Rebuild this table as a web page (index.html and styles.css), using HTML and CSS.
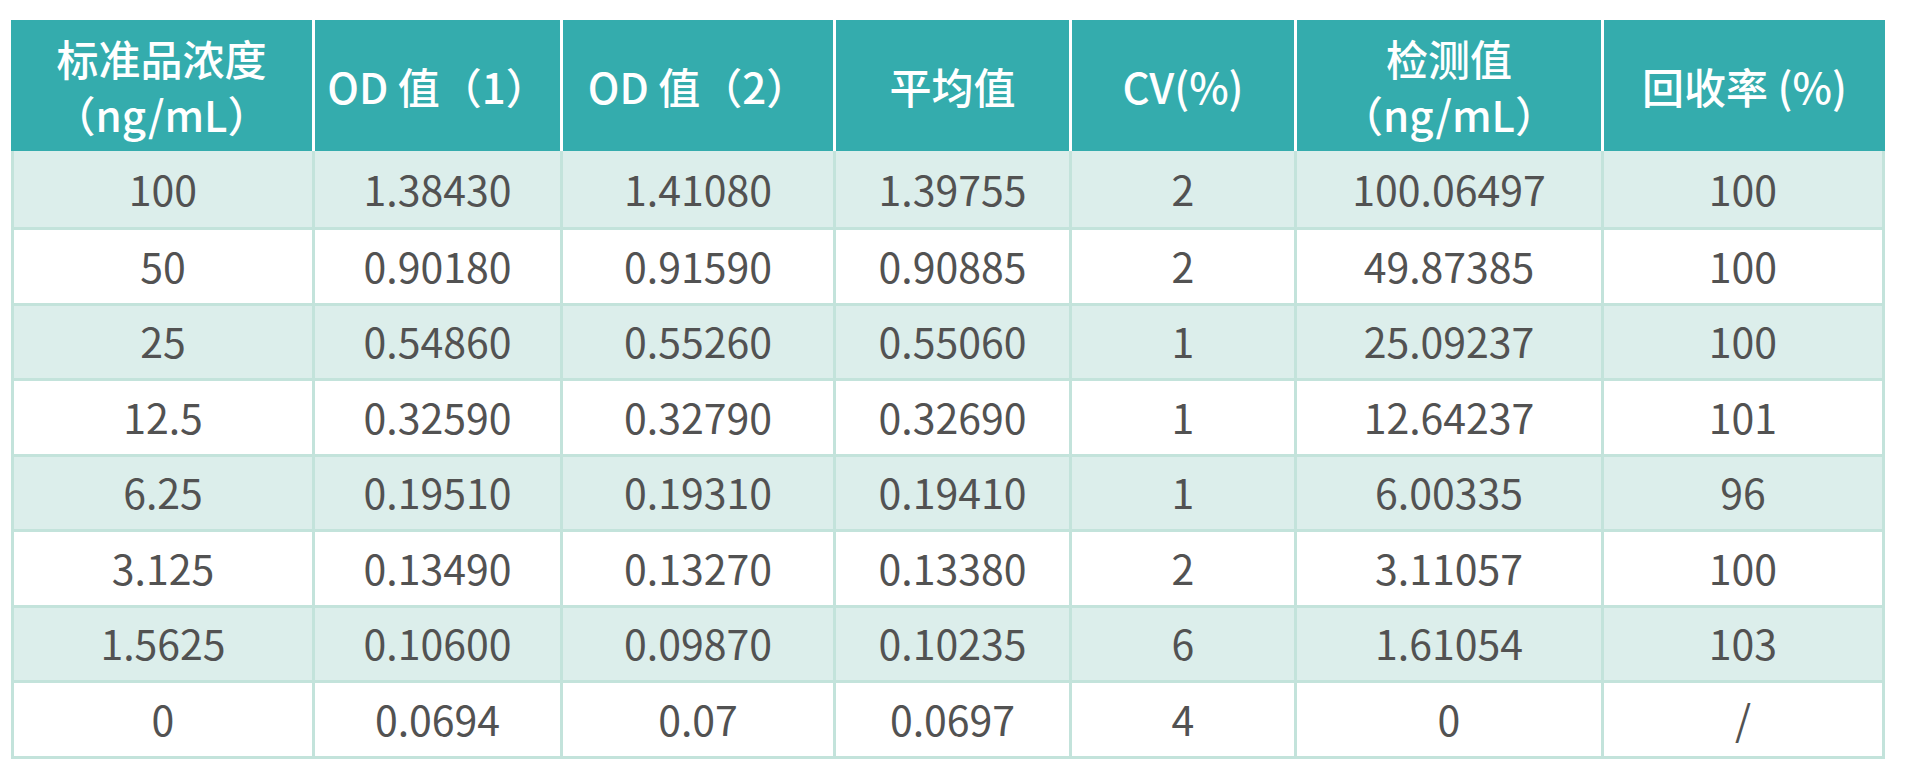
FILE: index.html
```html
<!DOCTYPE html>
<html lang="zh-CN">
<head>
<meta charset="utf-8">
<title>标准品回收率</title>
<link rel="stylesheet" href="styles.css">
</head>
<body>
<table class="data">
  <colgroup>
    <col class="c1"><col class="c2"><col class="c3"><col class="c4"><col class="c5"><col class="c6"><col class="c7">
  </colgroup>
  <thead>
    <tr class="head">
      <th>标准品浓度<br>（ng/mL）</th>
      <th>OD 值（1）</th>
      <th>OD 值（2）</th>
      <th>平均值</th>
      <th>CV(%)</th>
      <th>检测值<br>（ng/mL）</th>
      <th>回收率 (%)</th>
    </tr>
  </thead>
  <tbody>
    <tr class="row first shade"><td>100</td><td>1.38430</td><td>1.41080</td><td>1.39755</td><td>2</td><td>100.06497</td><td>100</td></tr>
    <tr class="row"><td>50</td><td>0.90180</td><td>0.91590</td><td>0.90885</td><td>2</td><td>49.87385</td><td>100</td></tr>
    <tr class="row shade"><td>25</td><td>0.54860</td><td>0.55260</td><td>0.55060</td><td>1</td><td>25.09237</td><td>100</td></tr>
    <tr class="row"><td>12.5</td><td>0.32590</td><td>0.32790</td><td>0.32690</td><td>1</td><td>12.64237</td><td>101</td></tr>
    <tr class="row shade"><td>6.25</td><td>0.19510</td><td>0.19310</td><td>0.19410</td><td>1</td><td>6.00335</td><td>96</td></tr>
    <tr class="row"><td>3.125</td><td>0.13490</td><td>0.13270</td><td>0.13380</td><td>2</td><td>3.11057</td><td>100</td></tr>
    <tr class="row shade"><td>1.5625</td><td>0.10600</td><td>0.09870</td><td>0.10235</td><td>6</td><td>1.61054</td><td>103</td></tr>
    <tr class="row"><td>0</td><td>0.0694</td><td>0.07</td><td>0.0697</td><td>4</td><td>0</td><td>/</td></tr>
  </tbody>
</table>
</body>
</html>
```

FILE: styles.css
```css
html, body {
  margin: 0;
  padding: 0;
  background: #ffffff;
}

body {
  padding: 20px 0 0 11px;
  font-family: "Noto Sans CJK SC", "Noto Sans", sans-serif;
}

.data {
  table-layout: fixed;
  width: 1874px;
  border-collapse: separate;
  border-spacing: 0;
}

.c1 { width: 304px; }
.c2 { width: 248px; }
.c3 { width: 273px; }
.c4 { width: 236px; }
.c5 { width: 225px; }
.c6 { width: 307px; }
.c7 { width: 281px; }

.head {
  height: 131px;
}

.head th {
  background: #34acad;
  color: #ffffff;
  font-size: 42px;
  font-weight: 500;
  line-height: 56px;
  text-align: center;
  vertical-align: middle;
  padding: 0;
  border-right: 3px solid #ffffff;
  white-space: nowrap;
}

.head th:last-child {
  border-right: 0;
}

.row {
  height: 75.5px;
}

.row.first {
  height: 79px;
}

.row td {
  background: #ffffff;
  color: #525252;
  font-size: 41px;
  font-weight: 400;
  line-height: 50px;
  text-align: center;
  vertical-align: middle;
  padding: 0 0 3px 0;
  border-right: 3px solid #c3e3db;
  border-bottom: 3px solid #c3e3db;
  white-space: nowrap;
}

.row td:first-child {
  border-left: 3px solid #c3e3db;
}

.row.shade td {
  background: #dceeeb;
}
```
